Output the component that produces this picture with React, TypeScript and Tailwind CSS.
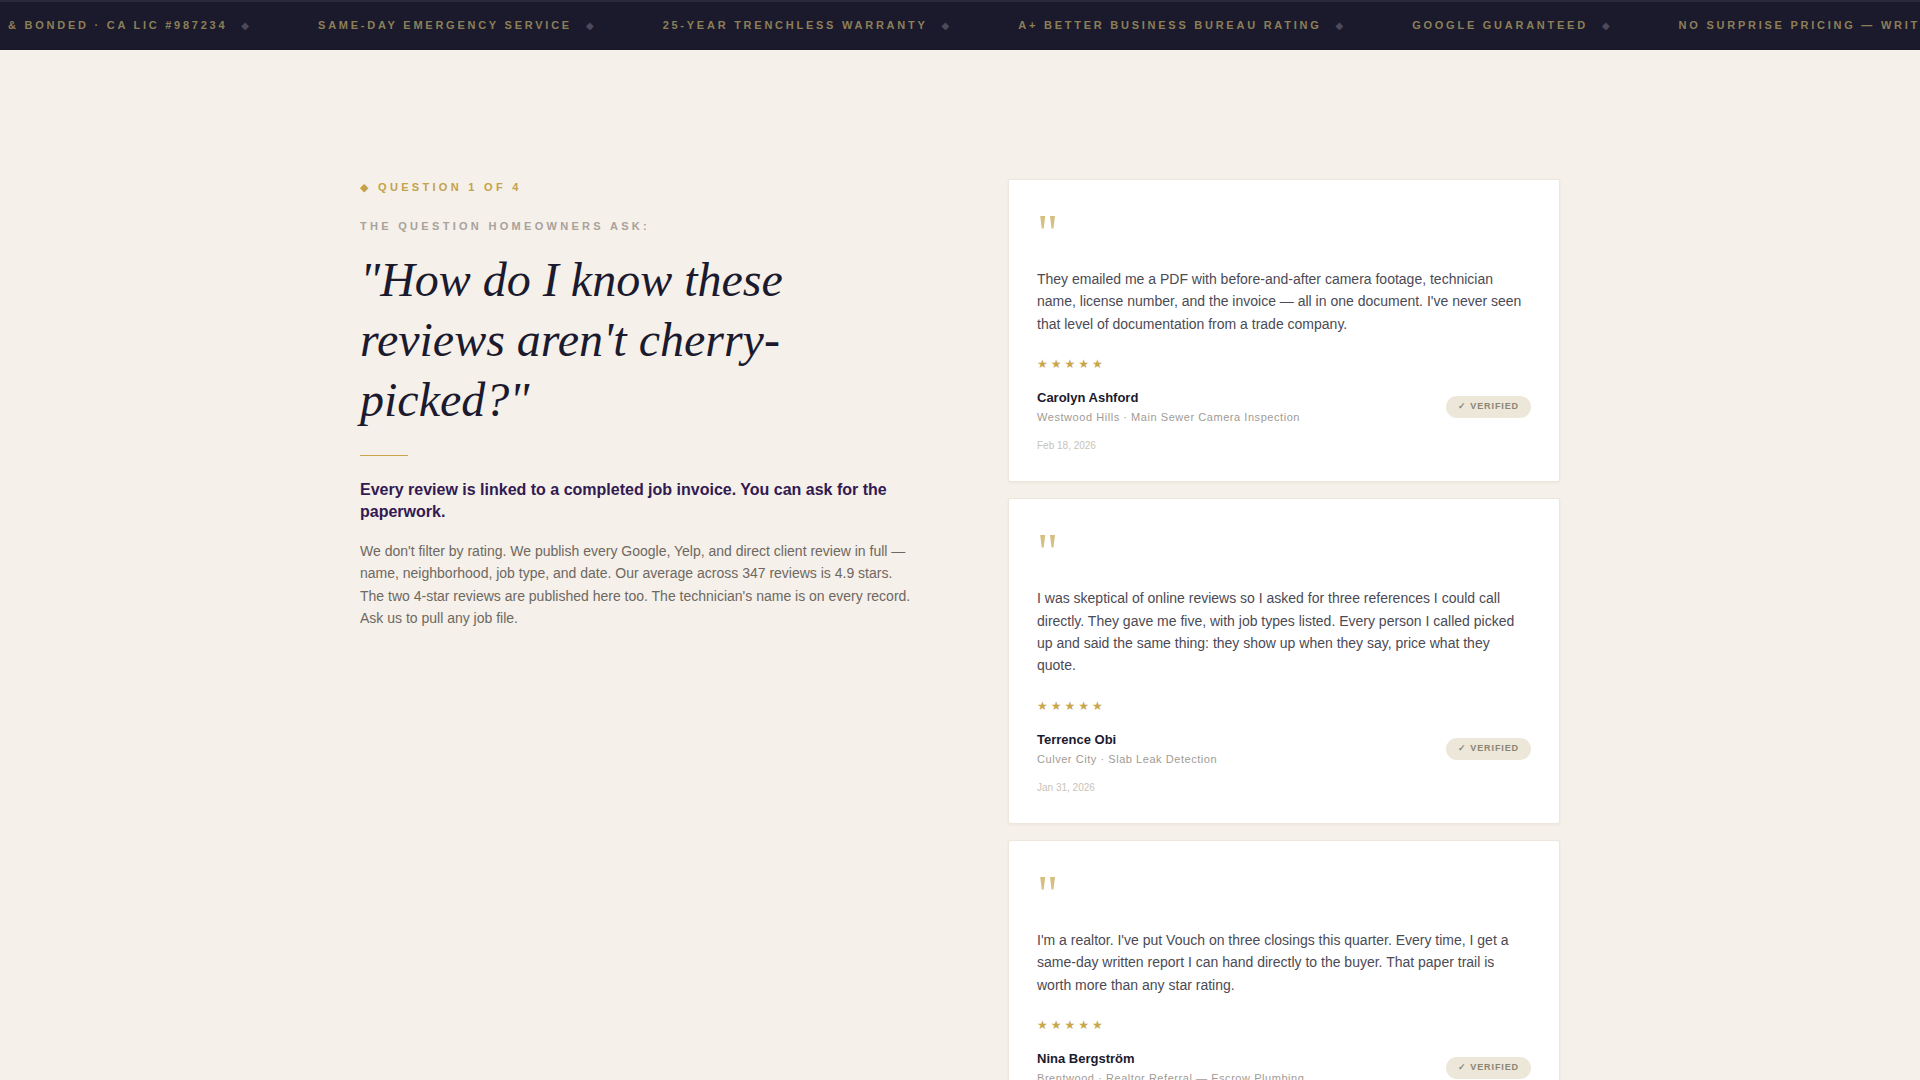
const tickerItems = [
  "& BONDED · CA LIC #987234",
  "SAME-DAY EMERGENCY SERVICE",
  "25-YEAR TRENCHLESS WARRANTY",
  "A+ BETTER BUSINESS BUREAU RATING",
  "GOOGLE GUARANTEED",
  "NO SURPRISE PRICING — WRITTEN QUOTES",
];

const reviews = [
  {
    id: 1,
    text: "They emailed me a PDF with before-and-after camera footage, technician name, license number, and the invoice — all in one document. I've never seen that level of documentation from a trade company.",
    name: "Carolyn Ashford",
    meta: "Westwood Hills · Main Sewer Camera Inspection",
    date: "Feb 18, 2026",
  },
  {
    id: 2,
    text: "I was skeptical of online reviews so I asked for three references I could call directly. They gave me five, with job types listed. Every person I called picked up and said the same thing: they show up when they say, price what they quote.",
    name: "Terrence Obi",
    meta: "Culver City · Slab Leak Detection",
    date: "Jan 31, 2026",
  },
  {
    id: 3,
    text: "I'm a realtor. I've put Vouch on three closings this quarter. Every time, I get a same-day written report I can hand directly to the buyer. That paper trail is worth more than any star rating.",
    name: "Nina Bergström",
    meta: "Brentwood · Realtor Referral — Escrow Plumbing",
    date: "Jan 14, 2026",
  },
];

const ReviewCard = ({ review }: { review: (typeof reviews)[number] }) => {
  return (
    <div className="bg-white border border-[#ece6dc] rounded-[2px] shadow-[0_1px_3px_rgba(60,40,20,0.05)] p-7">
      <div className="h-[52px] text-[52px] leading-none text-[#d6bf82] font-['Liberation_Serif',serif]">"</div>
      <p className="mt-2 text-[14px] leading-[1.6] text-[#4b4a55]">{review.text}</p>
      <div className="mt-5 text-[12px] leading-[18px] tracking-[3px] text-[#c9a64a] font-['DejaVu_Sans',sans-serif]">★★★★★</div>
      <div className="mt-4 flex items-center justify-between">
        <div>
          <div className="text-[13px] leading-[18px] font-bold text-[#1b1a2e]">{review.name}</div>
          <div className="mt-[2px] text-[11px] leading-[16px] tracking-[0.05em] text-[#a19b94]">{review.meta}</div>
        </div>
        <span className="h-[22px] flex items-center rounded-full bg-[#ede7d9] px-3 text-[9px] font-bold tracking-[0.1em] text-[#8b8574]">
          ✓ VERIFIED
        </span>
      </div>
      <div className="mt-[14px] text-[10px] leading-[14px] text-[#c9c3b9]">{review.date}</div>
    </div>
  );
};

export default function App() {
  return (
    <div className="min-h-screen bg-[#f5f0e9] font-['Liberation_Sans',Arial,sans-serif]">
      <div className="h-[50px] bg-[#1b1a2c] border-t-2 border-[#2b2a3d] pb-px flex items-center overflow-hidden whitespace-nowrap pl-2">
        {tickerItems.map((item) => (
          <div key={item} className="flex items-center shrink-0">
            <span className="text-[11px] font-bold tracking-[0.25em] text-[#8c7f58]">{item}</span>
            <span className="ml-[14px] mr-[69px] text-[10px] text-[#4b495a] font-['DejaVu_Sans',sans-serif]">◆</span>
          </div>
        ))}
      </div>

      <section className="pt-[129px] pb-24">
        <div className="max-w-[1200px] mx-auto grid grid-cols-2 gap-24 items-start">
          <div>
            <div className="text-[11px] leading-[16px] font-bold tracking-[0.3em] text-[#c4a24a]">
              <span className="font-['DejaVu_Sans',sans-serif]">◆</span> QUESTION 1 OF 4
            </div>
            <div className="mt-[22px] text-[11px] leading-[16px] font-bold tracking-[0.3em] text-[#a8a29b]">
              THE QUESTION HOMEOWNERS ASK:
            </div>
            <h2 className="mt-4 max-w-[520px] font-['Liberation_Serif',serif] italic font-normal text-[48px] leading-[60px] text-[#1b1a2e]">
              "How do I know these reviews aren't cherry-picked?"
            </h2>
            <div className="mt-[25px] w-12 h-px bg-[#c9a64a]" />
            <p className="mt-[23px] text-[16px] leading-[1.4] font-bold text-[#321a53]">
              Every review is linked to a completed job invoice. You can ask for the paperwork.
            </p>
            <p className="mt-4 text-[14px] leading-[1.6] text-[#6e6862]">
              We don't filter by rating. We publish every Google, Yelp, and direct client review in full — name,
              neighborhood, job type, and date. Our average across 347 reviews is 4.9 stars. The two 4-star reviews are
              published here too. The technician's name is on every record. Ask us to pull any job file.
            </p>
          </div>

          <div className="flex flex-col gap-4">
            {reviews.map((review) => (
              <ReviewCard key={review.id} review={review} />
            ))}
          </div>
        </div>
      </section>
    </div>
  );
}
